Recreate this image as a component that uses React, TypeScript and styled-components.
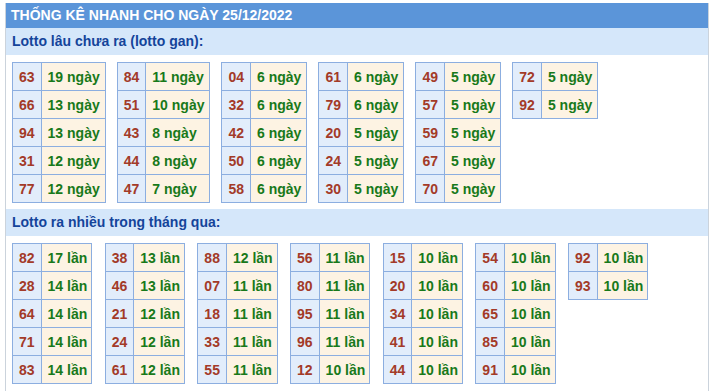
import styled, { createGlobalStyle } from "styled-components";

type Entry = [string, number];

const ganColumns: Entry[][] = [
    [["63", 19], ["66", 13], ["94", 13], ["31", 12], ["77", 12]],
    [["84", 11], ["51", 10], ["43", 8], ["44", 8], ["47", 7]],
    [["04", 6], ["32", 6], ["42", 6], ["50", 6], ["58", 6]],
    [["61", 6], ["79", 6], ["20", 5], ["24", 5], ["30", 5]],
    [["49", 5], ["57", 5], ["59", 5], ["67", 5], ["70", 5]],
    [["72", 5], ["92", 5]],
];

const hotColumns: Entry[][] = [
    [["82", 17], ["28", 14], ["64", 14], ["71", 14], ["83", 14]],
    [["38", 13], ["46", 13], ["21", 12], ["24", 12], ["61", 12]],
    [["88", 12], ["07", 11], ["18", 11], ["33", 11], ["55", 11]],
    [["56", 11], ["80", 11], ["95", 11], ["96", 11], ["12", 10]],
    [["15", 10], ["20", 10], ["34", 10], ["41", 10], ["44", 10]],
    [["54", 10], ["60", 10], ["65", 10], ["85", 10], ["91", 10]],
    [["92", 10], ["93", 10]],
];

type BlockProps = {
    title: string;
    columns: Entry[][];
    unit: string;
    gap: number;
    padRight: number;
};

function StatBlock({ title, columns, unit, gap, padRight }: BlockProps) {
    return (
        <>
            <S.SubTitle>{title}</S.SubTitle>
            <S.TableRow $gap={gap}>
                {columns.map((col, i) => (
                    <S.Table key={i}>
                        <tbody>
                            {col.map(([num, count]) => (
                                <tr key={num}>
                                    <S.NumCell>{num}</S.NumCell>
                                    <S.CountCell $padRight={padRight}>{count} {unit}</S.CountCell>
                                </tr>
                            ))}
                        </tbody>
                    </S.Table>
                ))}
            </S.TableRow>
        </>
    );
}

function App() {
    return (
        <>
            <GlobalStyle />
            <S.Container>
                <S.Header>THỐNG KÊ NHANH CHO NGÀY 25/12/2022</S.Header>
                <StatBlock title="Lotto lâu chưa ra (lotto gan):" columns={ganColumns} unit="ngày" gap={11} padRight={5} />
                <StatBlock title="Lotto ra nhiều trong tháng qua:" columns={hotColumns} unit="lần" gap={12.4} padRight={4} />
            </S.Container>
        </>
    );
}

const GlobalStyle = createGlobalStyle`
    body {
        margin: 0;
        background: #fff;
        font-family: "Liberation Sans", Arial, sans-serif;
    }
`;

const S = {
    Container: styled.div`
        margin: 3px 0 0 5px;
        width: 702px;
        min-height: 400px;
        border-left: 1px solid #cbd3dc;
        border-right: 1px solid #cbd3dc;
    `,
    Header: styled.div`
        height: 25px;
        line-height: 25px;
        background: #5b95d9;
        color: #fff;
        font-size: 14px;
        font-weight: bold;
        padding-left: 5px;
    `,
    SubTitle: styled.div`
        height: 27px;
        line-height: 27px;
        background: #d5e7fa;
        color: #14449a;
        font-size: 14px;
        font-weight: bold;
        padding-left: 6px;
    `,
    TableRow: styled.div<{ $gap: number }>`
        display: flex;
        align-items: flex-start;
        gap: ${(p) => p.$gap}px;
        padding: 7px 6px 6px 6px;
    `,
    Table: styled.table`
        border-collapse: collapse;
        font-size: 14px;
        font-weight: bold;
    `,
    NumCell: styled.td`
        border: 1px solid #8caee0;
        background: #e2edfb;
        color: #a33a28;
        height: 28px;
        padding: 0 6px;
        text-align: center;
        box-sizing: border-box;
    `,
    CountCell: styled.td<{ $padRight: number }>`
        border: 1px solid #8caee0;
        background: #fdf3e3;
        color: #18791a;
        height: 28px;
        padding: 0 ${(p) => p.$padRight}px 0 6px;
        white-space: nowrap;
        box-sizing: border-box;
    `,
};

export default App;
